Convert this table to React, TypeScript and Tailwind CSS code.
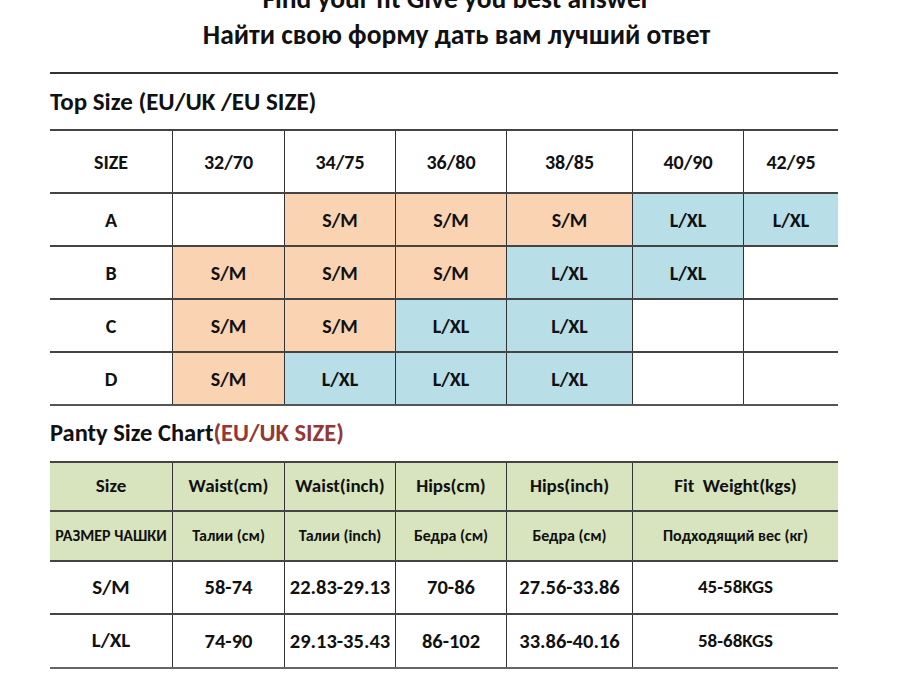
import React from "react";

const font = { fontFamily: '"Carlito", "Open Sans", "Liberation Sans", sans-serif' };

type C = "p" | "b" | "w";
const topCols = [122, 112, 111, 111, 126, 111, 95];
const topHeader = ["SIZE", "32/70", "34/75", "36/80", "38/85", "40/90", "42/95"];
const topRows: { label: string; cells: [string, C][] }[] = [
  { label: "A", cells: [["", "w"], ["S/M", "p"], ["S/M", "p"], ["S/M", "p"], ["L/XL", "b"], ["L/XL", "b"]] },
  { label: "B", cells: [["S/M", "p"], ["S/M", "p"], ["S/M", "p"], ["L/XL", "b"], ["L/XL", "b"], ["", "w"]] },
  { label: "C", cells: [["S/M", "p"], ["S/M", "p"], ["L/XL", "b"], ["L/XL", "b"], ["", "w"], ["", "w"]] },
  { label: "D", cells: [["S/M", "p"], ["L/XL", "b"], ["L/XL", "b"], ["L/XL", "b"], ["", "w"], ["", "w"]] },
];

const bg = (c: C) => (c === "p" ? "bg-[#fad3b3]" : c === "b" ? "bg-[#b8dee8]" : "bg-white");

const botCols = [122, 112, 111, 111, 126, 206];
const botH1 = ["Size", "Waist(cm)", "Waist(inch)", "Hips(cm)", "Hips(inch)", "Fit  Weight(kgs)"];
const botH2 = ["РАЗМЕР ЧАШКИ", "Талии (см)", "Талии (inch)", "Бедра (см)", "Бедра (см)", "Подходящий вес (кг)"];
const botRows = [
  ["S/M", "58-74", "22.83-29.13", "70-86", "27.56-33.86", "45-58KGS"],
  ["L/XL", "74-90", "29.13-35.43", "86-102", "33.86-40.16", "58-68KGS"],
];
const botRowH = ["h-[53px]", "h-[54px]"];

export default function App() {
  return (
    <div className="w-[913px] h-[684px] bg-white overflow-hidden text-[#111]" style={font}>
      <div className="flex flex-col items-center mt-[-19px]">
        <div className="text-[27.5px] font-bold leading-[36px]">Find your fit Give you best answer</div>
        <div className="text-[27.5px] font-bold leading-[36px]">Найти свою форму дать вам лучший ответ</div>
      </div>
      <div className="ml-[50px] w-[788px]">
        <div className="mt-[19px] h-[2px] bg-[#333]" />
        <div className="h-[55px] flex items-center text-[25px] font-semibold">Top Size (EU/UK /EU SIZE)</div>
        <div className="border-t-2 border-[#444]">
          <div className="flex h-[61px]">
            {topHeader.map((h, i) => (
              <div
                key={i}
                style={{ width: topCols[i] }}
                className={`flex items-center justify-center text-[20px] font-bold ${i > 0 ? "border-l border-[#333]" : ""}`}
              >
                {h}
              </div>
            ))}
          </div>
          {topRows.map((r) => (
            <div key={r.label} className="flex h-[53px] border-t-2 border-[#444]">
              <div style={{ width: topCols[0] }} className="flex items-center justify-center text-[20px] font-bold">
                {r.label}
              </div>
              {r.cells.map(([t, c], i) => (
                <div
                  key={i}
                  style={{ width: topCols[i + 1] }}
                  className={`flex items-center justify-center text-[20px] font-bold border-l border-[#333] ${bg(c)}`}
                >
                  {t}
                </div>
              ))}
            </div>
          ))}
          <div className="h-[2px] bg-[#555]" />
        </div>
        <div className="h-[55px] flex items-center text-[24.5px] font-semibold">
          Panty Size Chart<span className="text-[#953735]">(EU/UK SIZE)</span>
        </div>
        <div className="border-t-2 border-[#444]">
          <div className="flex h-[47px] bg-[#d7e4bd]">
            {botH1.map((h, i) => (
              <div
                key={i}
                style={{ width: botCols[i] }}
                className={`flex items-center justify-center text-[19px] font-bold whitespace-pre ${i > 0 ? "border-l border-[#333]" : ""}`}
              >
                {h}
              </div>
            ))}
          </div>
          <div className="flex h-[50px] bg-[#d7e4bd] border-t-2 border-[#444]">
            {botH2.map((h, i) => (
              <div
                key={i}
                style={{ width: botCols[i] }}
                className={`flex items-center justify-center text-[16px] font-bold whitespace-nowrap ${i > 0 ? "border-l border-[#333]" : ""}`}
              >
                {h}
              </div>
            ))}
          </div>
          {botRows.map((r, ri) => (
            <div key={ri} className={`flex ${botRowH[ri]} border-t-2 border-[#444]`}>
              {r.map((t, i) => (
                <div
                  key={i}
                  style={{ width: botCols[i] }}
                  className={`flex items-center justify-center font-bold ${
                    i === 0 ? "text-[21px]" : i === 5 ? "text-[19px]" : "text-[20.5px]"
                  } ${i > 0 ? "border-l border-[#333]" : ""}`}
                >
                  {t}
                </div>
              ))}
            </div>
          ))}
          <div className="h-[2px] bg-[#666]" />
        </div>
      </div>
    </div>
  );
}
